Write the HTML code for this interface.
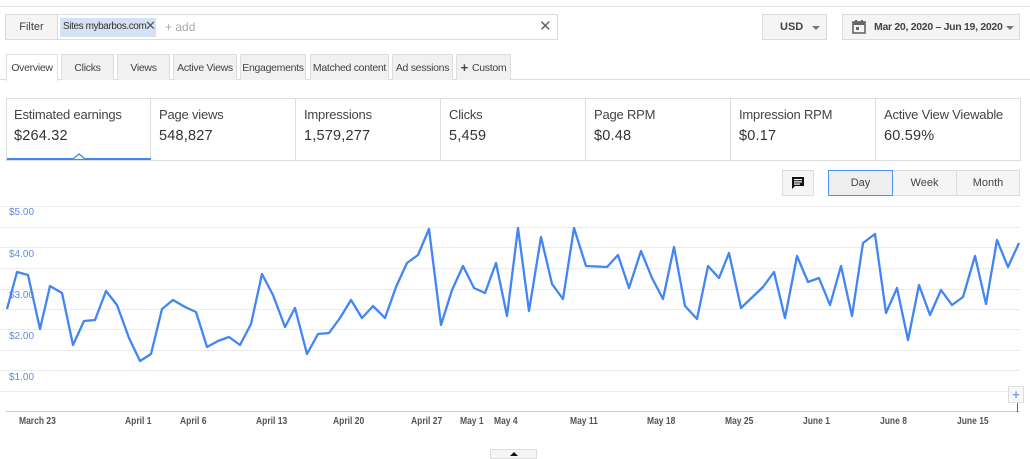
<!DOCTYPE html>
<html><head><style>
*{box-sizing:border-box;margin:0;padding:0}
body{width:1030px;height:456px;background:#fff;font-family:"Liberation Sans",Arial,sans-serif;position:relative;overflow:hidden;color:#333}
.a{position:absolute;white-space:nowrap}
.btn{position:absolute;background:#f5f5f5;border:1px solid #dcdcdc;font-size:11px;color:#444;display:flex;align-items:center;justify-content:center;white-space:nowrap}
.tab{position:absolute;top:54px;height:26px;background:#f1f1f1;border:1px solid #ddd;border-bottom:none;font-size:10.5px;letter-spacing:-0.3px;color:#444;display:flex;align-items:center;justify-content:center;white-space:nowrap;overflow:hidden}
.cell{position:absolute;top:98px;height:62px;width:145px;border-right:1px solid #ddd;padding:9px 0 0 8px;white-space:nowrap}
.cell .l{font-size:13px;color:#444;letter-spacing:-0.2px}
.cell .v{font-size:14.5px;color:#333;margin-top:6px;letter-spacing:.2px}
.xl{position:absolute;top:416px;font-size:10px;color:#555;font-weight:bold;transform:scaleX(.85);transform-origin:left;white-space:nowrap}
.yl{position:absolute;left:9px;font-size:10px;color:#5a8be8}
</style></head><body>
<div class="a" style="left:0;top:6px;width:1030px;height:1px;background:#e3e3e3"></div>
<div class="btn" style="left:5px;top:14px;width:53px;height:26px">Filter</div>
<div class="a" style="left:57px;top:14px;width:501px;height:26px;border:1px solid #dcdcdc;background:#fff"></div>
<div class="a" style="left:60px;top:18px;width:96px;height:19px;background:#d5e2f3"></div>
<div class="a" style="left:63px;top:21px;font-size:10px;letter-spacing:-0.4px;color:#333">Sites mybarbos.com</div>
<div class="a" style="left:145px;top:18px;font-size:13px;color:#555">✕</div>
<div class="a" style="left:165px;top:20px;font-size:12px;color:#aaa">+ add</div>
<div class="a" style="left:539px;top:17px;font-size:15px;color:#666">✕</div>
<div class="btn" style="left:762px;top:14px;width:65px;height:26px;font-weight:bold;justify-content:flex-start;padding-left:17px">USD<span style="position:absolute;right:6px;top:11px;border:4px solid transparent;border-top:4px solid #777"></span></div>
<div class="btn" style="left:842px;top:14px;width:178px;height:26px;font-weight:bold;justify-content:flex-start;padding-left:9px;letter-spacing:-0.3px">
<svg width="14" height="14" viewBox="0 0 14 14" style="margin-right:8px"><rect x="1" y="2" width="12" height="11" fill="none" stroke="#666" stroke-width="1.6"/><rect x="1" y="2" width="12" height="3" fill="#666"/><rect x="3" y="0" width="2" height="3" fill="#666"/><rect x="9" y="0" width="2" height="3" fill="#666"/><rect x="4" y="7" width="3" height="3" fill="#666"/></svg><span style="font-size:10.5px">Mar 20, 2020 – Jun 19, 2020</span><span style="position:absolute;right:5px;top:11px;border:4px solid transparent;border-top:4px solid #777"></span></div>
<div class="a" style="left:0;top:79px;width:1030px;height:1px;background:#ddd"></div>
<div class="tab" style="left:6px;width:52px;background:#fff;height:27px">Overview</div>
<div class="tab" style="left:61px;width:53px">Clicks</div>
<div class="tab" style="left:117px;width:53px">Views</div>
<div class="tab" style="left:173px;width:64px">Active Views</div>
<div class="tab" style="left:240px;width:66px">Engagements</div>
<div class="tab" style="left:310px;width:79px">Matched content</div>
<div class="tab" style="left:392px;width:61px">Ad sessions</div>
<div class="tab" style="left:456px;width:55px"><b style="font-size:13px;margin-right:4px">+</b>Custom</div>
<div class="a" style="left:6px;top:98px;width:1015px;height:63px;border:1px solid #ddd"></div>
<div class="cell" style="left:6px"><div class="l">Estimated earnings</div><div class="v">$264.32</div></div>
<div class="cell" style="left:151px"><div class="l">Page views</div><div class="v">548,827</div></div>
<div class="cell" style="left:296px"><div class="l">Impressions</div><div class="v">1,579,277</div></div>
<div class="cell" style="left:441px"><div class="l">Clicks</div><div class="v">5,459</div></div>
<div class="cell" style="left:586px"><div class="l">Page RPM</div><div class="v">$0.48</div></div>
<div class="cell" style="left:731px"><div class="l">Impression RPM</div><div class="v">$0.17</div></div>
<div class="cell" style="left:876px;border-right:none"><div class="l">Active View Viewable</div><div class="v">60.59%</div></div>
<div class="a" style="left:7px;top:158px;width:144px;height:2px;background:#4285f4"></div>
<svg class="a" style="left:72px;top:153px" width="14" height="7"><path d="M1 6 L7 1 L13 6" fill="#fff" stroke="#4285f4" stroke-width="1.3"/></svg>
<div class="btn" style="left:782px;top:170px;width:32px;height:26px"><svg width="14" height="14" viewBox="0 0 14 14"><path d="M1 1h12v9H4l-3 3z" fill="#111"/><rect x="3" y="3" width="8" height="1.2" fill="#fff"/><rect x="3" y="5.3" width="8" height="1.2" fill="#fff"/><rect x="3" y="7.5" width="6" height="1.2" fill="#fff"/></svg></div>
<div class="btn" style="left:828px;top:170px;width:65px;height:26px;border:1px solid #4d90fe;background:#eee;z-index:2">Day</div>
<div class="btn" style="left:892px;top:170px;width:65px;height:26px">Week</div>
<div class="btn" style="left:956px;top:170px;width:64px;height:26px">Month</div>
<svg class="a" style="left:0;top:0" width="1030" height="456">
<g stroke="#ebebeb" stroke-width="1">
<line x1="0" y1="206.5" x2="1020" y2="206.5"/><line x1="0" y1="227.5" x2="1020" y2="227.5"/><line x1="0" y1="247.5" x2="1020" y2="247.5"/><line x1="0" y1="268.5" x2="1020" y2="268.5"/><line x1="0" y1="289.5" x2="1020" y2="289.5"/><line x1="0" y1="309.5" x2="1020" y2="309.5"/><line x1="0" y1="329.5" x2="1020" y2="329.5"/><line x1="0" y1="350.5" x2="1020" y2="350.5"/><line x1="0" y1="370.5" x2="1020" y2="370.5"/><line x1="0" y1="391.5" x2="1020" y2="391.5"/>
</g>
<line x1="6" y1="411.5" x2="1020" y2="411.5" stroke="#ccc"/>
<line x1="1017.5" y1="400" x2="1017.5" y2="412" stroke="#666"/>
<polyline fill="none" stroke="#4285f4" stroke-width="2.3" stroke-linejoin="round" points="7,309 17,272 28,275 40,329 50,286 62,293 73,345 84,321 95,320 106,291 117,305 129,338 140,361 151,354 162,309 173,300 185,307 196,312 207,347 218,341 229,337 240,345 251,324 262,274 273,295 285,327 295,308 307,354 318,334 329,333 340,318 351,300 362,318 373,306 385,318 396,287 407,263 418,255 429,229 441,325 452,290 463,266 474,288 485,293 496,263 507,316 518,228 529,311 541,237 552,284 563,299 574,228 586,266 607,267 618,255 629,288 641,251 652,278 663,299 674,247 685,306 697,319 708,266 719,278 729,253 741,308 763,287 774,272 785,318 797,256 808,282 819,278 830,305 841,266 852,316 863,243 875,234 886,313 897,288 908,340 919,285 930,315 941,290 952,305 963,297 975,256 986,304 997,240 1008,267 1019,243"/>
</svg>
<div class="yl" style="top:207px">$5.00</div>
<div class="yl" style="top:249px">$4.00</div>
<div class="yl" style="top:290px">$3.00</div>
<div class="yl" style="top:331px">$2.00</div>
<div class="yl" style="top:372px">$1.00</div>
<div class="a" style="left:1008px;top:386px;width:16px;height:17px;border:1px solid #ddd;background:#f8f8f8;color:#7aa3dd;font-weight:bold;font-size:13px;text-align:center;line-height:15px">+</div>
<div class="xl" style="left:19px">March 23</div>
<div class="xl" style="left:125px">April 1</div>
<div class="xl" style="left:180px">April 6</div>
<div class="xl" style="left:256px">April 13</div>
<div class="xl" style="left:333px">April 20</div>
<div class="xl" style="left:411px">April 27</div>
<div class="xl" style="left:460px">May 1</div>
<div class="xl" style="left:494px">May 4</div>
<div class="xl" style="left:570px">May 11</div>
<div class="xl" style="left:647px">May 18</div>
<div class="xl" style="left:725px">May 25</div>
<div class="xl" style="left:803px">June 1</div>
<div class="xl" style="left:880px">June 8</div>
<div class="xl" style="left:957px">June 15</div>
<div class="a" style="left:490px;top:449px;width:47px;height:10px;border:1px solid #ddd;background:#f5f5f5"><div style="margin:2px auto 0;width:0;border:4px solid transparent;border-bottom:4px solid #111;border-top:none"></div></div>
</body></html>
